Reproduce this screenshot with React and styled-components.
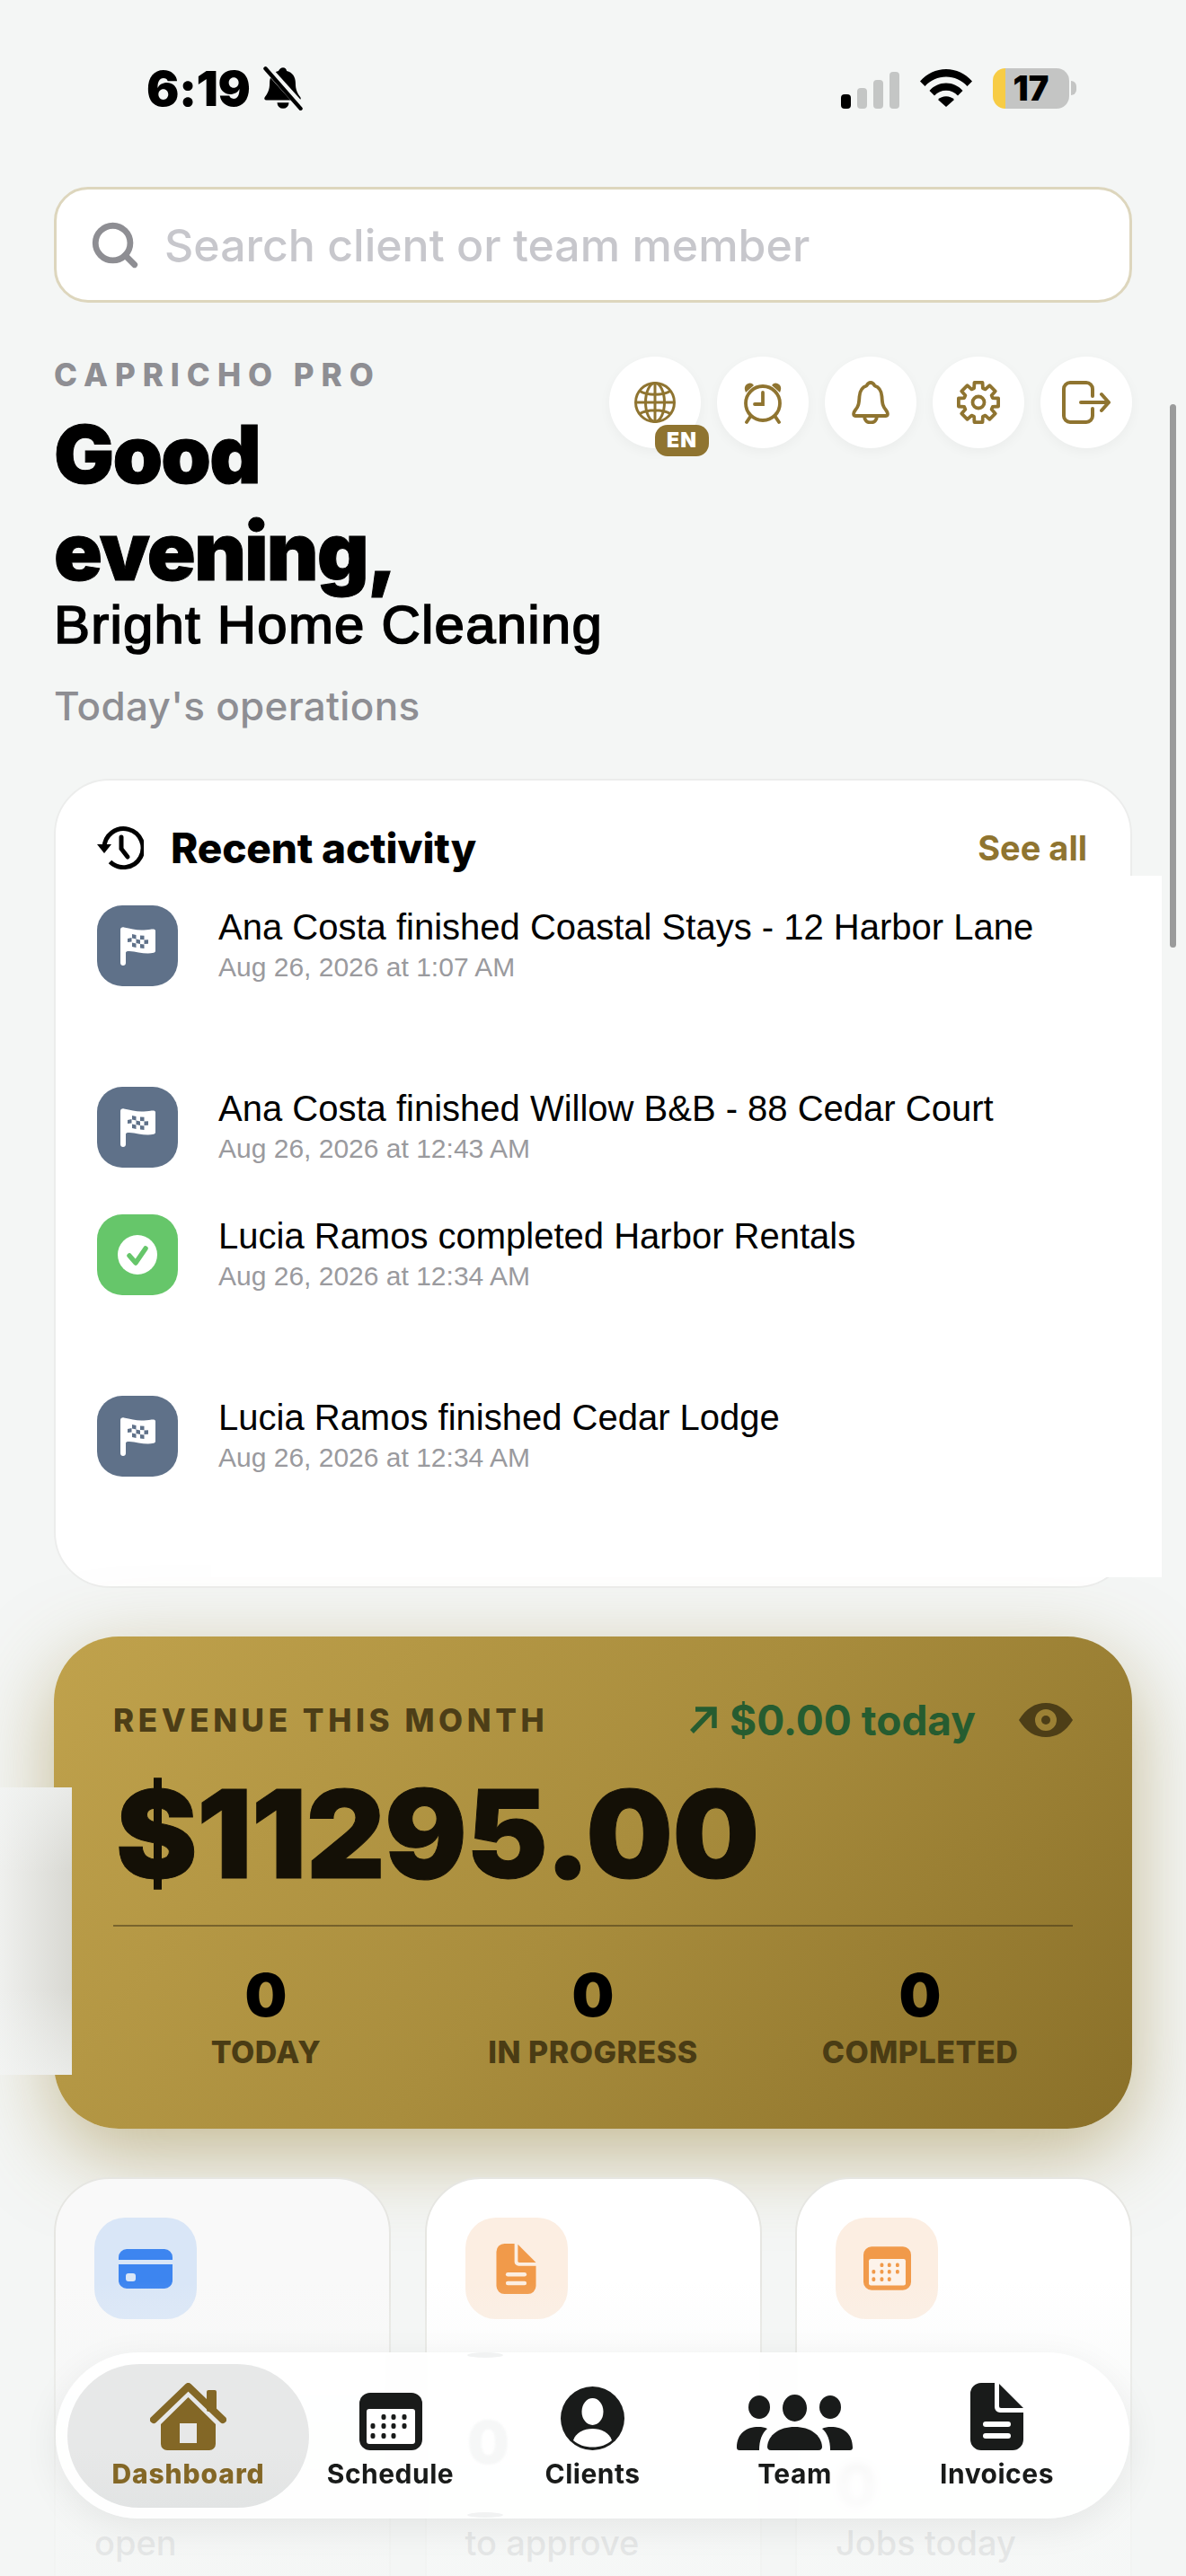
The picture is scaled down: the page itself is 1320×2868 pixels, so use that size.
import styled, { createGlobalStyle } from "styled-components";
import { Search } from "lucide-react";

const GOLD = "#8f7430";
const INK = "#191b1a";

const GlobalStyle = createGlobalStyle`
    html, body {
        margin: 0;
        padding: 0;
        background: #f4f6f5;
        font-family: Inter, "Liberation Sans", sans-serif;
    }
    * { box-sizing: border-box; }
`;

const Screen = styled.div`
    position: relative;
    width: 1320px;
    height: 2868px;
    padding: 0 60px;
    overflow: hidden;
    background: #f4f6f5;
`;

const StatusBar = styled.div`
    display: flex;
    align-items: center;
    justify-content: space-between;
    height: 196px;
    margin-bottom: 12px;
    padding: 0 62px 0 103px;
`;

const StatusLeft = styled.div`
    display: flex;
    align-items: center;
    gap: 12px;
`;

const Clock = styled.span`
    font-size: 54px;
    font-weight: 900;
    letter-spacing: -0.5px;
    color: #000;
`;

const StatusRight = styled.div`
    display: flex;
    align-items: center;
    gap: 23px;
`;

const Signal = styled.div`
    display: flex;
    align-items: flex-end;
    gap: 7px;
    height: 41px;
    margin-top: 4px;
`;

const SignalBar = styled.i`
    display: block;
    width: 11px;
    height: ${(p) => p.$h}px;
    border-radius: 4px;
    background: ${(p) => (p.$on ? "#000" : "#c4c6c5")};
`;

const Battery = styled.div`
    display: flex;
    align-items: center;
    justify-content: center;
    width: 85px;
    height: 45px;
    border-radius: 14px;
    font-size: 38px;
    line-height: 45px;
    font-weight: 900;
    color: #000;
    background: linear-gradient(90deg, #f7cc45 14px, #c4c5c4 14px);
`;

const BatteryNub = styled.i`
    display: block;
    width: 6px;
    height: 16px;
    margin-left: -21px;
    border-radius: 0 6px 6px 0;
    background: #c4c5c4;
`;

const SearchBox = styled.label`
    display: flex;
    align-items: center;
    gap: 26px;
    height: 129px;
    padding: 0 40px 0 36px;
    border: 3px solid #ddd6bd;
    border-radius: 38px;
    background: #fff;
    color: #8e8e93;
`;

const SearchInput = styled.input`
    flex: 1;
    border: 0;
    outline: 0;
    padding: 0;
    background: transparent;
    font-family: Inter, sans-serif;
    font-size: 50px;
    font-weight: 500;
    &::placeholder { color: #c7c7cc; opacity: 1; }
`;

const Header = styled.header`
    display: flex;
    align-items: flex-start;
    justify-content: space-between;
    margin-top: 60px;
`;

const TitleBlock = styled.div`
    display: flex;
    flex-direction: column;
`;

const Kicker = styled.div`
    font-size: 35px;
    line-height: 40px;
    font-weight: 800;
    letter-spacing: 8px;
    color: #8e8e93;
`;

const Greeting = styled.h1`
    width: 460px;
    margin: 15px 0 0;
    font-size: 89px;
    line-height: 108px;
    font-weight: 900;
    letter-spacing: -1.7px;
    -webkit-text-stroke: 1px #000;
    color: #000;
`;

const Company = styled.div`
    margin-top: -4px;
    font-family: "Liberation Sans", Arial, sans-serif;
    font-size: 60px;
    line-height: 64px;
    letter-spacing: 1.2px;
    -webkit-text-stroke: 1.7px #000;
    color: #000;
`;

const Subtitle = styled.div`
    margin-top: 32px;
    font-size: 44px;
    line-height: 52px;
    font-weight: 500;
    letter-spacing: 0.3px;
    color: #8e8e93;
`;

const HeaderActions = styled.div`
    display: flex;
    gap: 18px;
`;

const RoundButton = styled.button`
    position: relative;
    display: flex;
    align-items: center;
    justify-content: center;
    width: 102px;
    height: 102px;
    padding: 0;
    border: 0;
    border-radius: 50%;
    background: #fff;
    color: ${GOLD};
    box-shadow: 0 4px 14px rgba(0, 0, 0, 0.04);
`;

const LangBadge = styled.span`
    position: absolute;
    left: 51px;
    top: 76px;
    width: 60px;
    height: 35px;
    border-radius: 14px;
    background: ${GOLD};
    color: #fff;
    font-family: Inter, sans-serif;
    font-size: 23px;
    line-height: 35px;
    font-weight: 900;
    letter-spacing: 1px;
    text-align: center;
`;

const ActivityCard = styled.section`
    margin-top: 55px;
    padding: 46px 48px 122px 46px;
    border: 2px solid #ecedec;
    border-radius: 62px;
    background: #fff;
`;

const ActivityHead = styled.div`
    display: flex;
    align-items: center;
    height: 58px;
    margin-bottom: 35px;
`;

const ActivityTitle = styled.h2`
    flex: 1;
    margin: 0 0 0 30px;
    font-size: 46px;
    font-weight: 800;
    letter-spacing: -0.2px;
    color: #000;
`;

const SeeAll = styled.a`
    font-size: 38px;
    font-weight: 700;
    color: ${GOLD};
`;

const ActivityRow = styled.div`
    position: relative;
    z-index: 2;
    display: flex;
    margin-bottom: ${(p) => p.$gap}px;
    &:last-child { margin-bottom: 0; }
`;

const RowIcon = styled.div`
    display: flex;
    align-items: center;
    justify-content: center;
    flex: none;
    width: 90px;
    height: 90px;
    border-radius: 28px;
    background: ${(p) => p.$bg};
`;

const RowText = styled.div`
    margin-left: 45px;
    padding-top: 1px;
    font-family: "Liberation Sans", Arial, sans-serif;
`;

const RowTitle = styled.div`
    font-size: 40px;
    line-height: 46px;
    color: #000;
`;

const RowDate = styled.div`
    margin-top: 4px;
    font-size: 30px;
    line-height: 36px;
    color: #9a9a9e;
`;

// white block that sits over the card's lower right in the capture
const WhitePatch = styled.div`
    position: absolute;
    z-index: 1;
    left: 235px;
    top: 975px;
    width: 1058px;
    height: 781px;
    background: #fff;
`;

const SidePatch = styled.div`
    position: absolute;
    z-index: 3;
    left: 0;
    top: 1990px;
    width: 80px;
    height: 320px;
    background:
        linear-gradient(180deg, rgba(244, 246, 245, 0.6), transparent 30%, transparent 70%, rgba(244, 246, 245, 0.6)),
        linear-gradient(90deg, #eff0ee, #d8d8d2);
`;

const RevenueCard = styled.section`
    margin-top: 54px;
    padding: 63px 66px 66px;
    height: 548px;
    border-radius: 72px;
    background: linear-gradient(130deg, #c0a24c 0%, #a98d3d 50%, #8a7029 100%);
    box-shadow: 0 28px 90px rgba(150, 125, 50, 0.5);
`;

const RevenueTop = styled.div`
    display: flex;
    align-items: center;
    height: 60px;
`;

const RevenueLabel = styled.div`
    flex: 1;
    font-size: 35px;
    font-weight: 800;
    letter-spacing: 4.6px;
    color: #4d3e17;
`;

const TodayChange = styled.div`
    display: flex;
    align-items: center;
    gap: 14px;
    margin-right: 48px;
    font-size: 46px;
    font-weight: 700;
    color: #265c30;
`;

const Amount = styled.div`
    margin: 22px 0 0 3px;
    font-size: 136px;
    line-height: 150px;
    font-weight: 900;
    letter-spacing: -0.6px;
    -webkit-text-stroke: 1px #141006;
    color: #141006;
`;

const Divider = styled.hr`
    margin: 26px 0 0;
    border: 0;
    height: 2px;
    background: rgba(60, 48, 20, 0.5);
`;

const Stats = styled.div`
    display: grid;
    grid-template-columns: repeat(3, 1fr);
    margin: 38px -12px 0;
`;

const Stat = styled.div`
    text-align: center;
`;

const StatValue = styled.div`
    font-size: 66px;
    line-height: 76px;
    font-weight: 900;
    color: #000;
`;

const StatLabel = styled.div`
    margin-top: 6px;
    font-size: 34px;
    line-height: 40px;
    font-weight: 800;
    letter-spacing: 0.5px;
    color: #4a3c14;
`;

const SummaryGrid = styled.div`
    display: grid;
    grid-template-columns: repeat(3, 375px);
    justify-content: space-between;
    margin-top: 54px;
`;

const SummaryCard = styled.div`
    height: 520px;
    padding: 43px;
    border: 2px solid #e6e6e2;
    border-radius: 62px;
    background: ${(p) => p.$bg || "#fff"};
`;

const SummaryIcon = styled.div`
    display: flex;
    align-items: center;
    justify-content: center;
    width: 114px;
    height: 113px;
    border-radius: 34px;
    background: ${(p) => p.$bg};
`;

const SummaryValue = styled.div`
    height: 80px;
    margin-top: 145px;
    font-size: 66px;
    line-height: 80px;
    font-weight: 900;
    color: #000;
`;

const SummaryLabel = styled.div`
    margin-top: 1px;
    font-size: 38px;
    line-height: 46px;
    font-weight: 500;
    color: #8e8e93;
`;

const BottomFade = styled.div`
    position: absolute;
    left: 0;
    right: 0;
    top: 2540px;
    bottom: 0;
    background: linear-gradient(180deg, rgba(244, 246, 245, 0), rgba(244, 246, 245, 0.85) 70%);
`;

const TabBar = styled.nav`
    position: absolute;
    z-index: 4;
    left: 62px;
    top: 2619px;
    width: 1195px;
    height: 185px;
    display: grid;
    grid-template-columns: repeat(5, 225px);
    padding: 0 35px;
    border-radius: 92px;
    background: rgba(255, 255, 255, 0.9);
    backdrop-filter: blur(3px);
    box-shadow: 0 10px 40px rgba(0, 0, 0, 0.07);
`;

const GhostZero = styled.span`
    position: absolute;
    left: 458px;
    top: 70px;
    font-size: 66px;
    line-height: 60px;
    font-weight: 900;
    color: #f6f7f7;
    filter: blur(1px);
`;

const GhostArc = styled.i`
    position: absolute;
    left: 458px;
    width: 40px;
    height: 6px;
    top: ${(p) => p.$top}px;
    border-radius: 50%;
    background: #f1f2f2;
`;

const Tab = styled.a`
    position: relative;
    display: flex;
    flex-direction: column;
    align-items: center;
    height: 100%;
    padding-top: 34px;
    color: ${(p) => (p.$active ? "#836726" : INK)};
    &::before {
        content: ${(p) => (p.$active ? '""' : "none")};
        position: absolute;
        left: -22px;
        right: -22px;
        top: 13px;
        bottom: 12px;
        border-radius: 80px;
        background: linear-gradient(180deg, #e7e8e8 60%, #e2e4e4);
    }
`;

const TabIcon = styled.div`
    position: relative;
    display: flex;
    align-items: flex-end;
    justify-content: center;
    height: 75px;
`;

const TabLabel = styled.span`
    position: relative;
    margin-top: 8px;
    font-size: 30px;
    line-height: 36px;
    font-weight: ${(p) => (p.$active ? 800 : 700)};
    letter-spacing: ${(p) => (p.$active ? "0.9px" : "0.5px")};
`;

const Scrollbar = styled.div`
    position: absolute;
    z-index: 5;
    right: 11px;
    top: 450px;
    width: 7px;
    height: 605px;
    border-radius: 4px;
    background: #9a9b9b;
`;

const BellSlash = () => (
    <svg width="50" height="50" viewBox="0 0 46 46">
        <path d="M23 2c2 0 3.500 1.500 3.800 3.600 6 1.400 9 6.400 9 12.400 0 7 2.200 11 5 14.500 1 1.500 0 3-1.700 3H6c-1.800 0-2.700-1.500-1.700-3 2.800-3.500 5-7.500 5-14.500 0-6 3-11 9-12.400C19.500 3.500 21 2 23 2z" fill="#000" />
        <path d="M17 38h12a6 6 0 0 1-12 0z" fill="#000" />
        <path d="M6 2l36 40" stroke="#f4f6f5" strokeWidth="8" />
        <path d="M5 3l36 41" stroke="#000" strokeWidth="4" strokeLinecap="round" />
    </svg>
);

const Wifi = () => (
    <svg width="58" height="42" viewBox="0 0 58 42" fill="#000">
        <path d="M0 13.500C7.500 4.800 17.800 0 29 0s21.500 4.800 29 13.500l-5.500 5.500C46.300 12.200 38 8.500 29 8.500S11.700 12.200 5.500 19z" />
        <path d="M10.500 24C15.300 18.500 21.800 15.500 29 15.500s13.700 3 18.500 8.500L42 29.500C38.500 25.700 34 23.800 29 23.800s-9.500 1.900-13 5.700z" />
        <path d="M20 34c2.400-2.400 5.500-3.700 9-3.700s6.600 1.300 9 3.700l-9 8z" />
    </svg>
);

const Globe = () => (
    <svg width="46" height="46" viewBox="0 0 46 46" fill="none" stroke="currentColor" strokeWidth="3">
        <circle cx="23" cy="23" r="21.500" />
        <ellipse cx="23" cy="23" rx="10.500" ry="21.500" />
        <path d="M23 1.500v43M1.500 23h43M6 10.500c9 5 25 5 34 0M6 35.500c9-5 25-5 34 0" />
    </svg>
);

const Alarm = () => (
    <svg width="44" height="48" viewBox="0 0 44 48" fill="none" stroke="currentColor" strokeWidth="3.800" strokeLinecap="round">
        <circle cx="22" cy="25" r="19" />
        <path d="M22 13v13H13M8 40l-4 6M36 40l4 6" />
        <path d="M2 10a6 6 0 0 1 8-7l2 2-9 8z" fill="currentColor" stroke="none" />
        <path d="M42 10a6 6 0 0 0-8-7l-2 2 9 8z" fill="currentColor" stroke="none" />
    </svg>
);

const Bell = () => (
    <svg width="46" height="48" viewBox="0 0 46 48" fill="none" stroke="currentColor" strokeWidth="3.800" strokeLinejoin="round">
        <path d="M23 2c2.500 0 3.500 1.500 4.500 3.500 5 1.500 7.500 5.500 8 12 .5 8 1 11 4.500 15 2 2.500 3 6.500 0 6.500H6c-3 0-2-4 0-6.500 3.500-4 4-7 4.500-15 .5-6.500 3-10.500 8-12C19.500 3.500 20.500 2 23 2z" />
        <path d="M16 39c0 5 3 7.500 7 7.500s7-2.500 7-7.500" />
    </svg>
);

// 8 tooth cog outline
const cogPath = (() => {
    const pts = [];
    for (let i = 0; i < 8; i++) {
        const a = (i * Math.PI) / 4;
        [[-0.3, 16.5], [-0.2, 22.5], [0.2, 22.5], [0.3, 16.5]].forEach(([da, r]) => {
            pts.push(`${(24 + r * Math.sin(a + da)).toFixed(1)} ${(24 - r * Math.cos(a + da)).toFixed(1)}`);
        });
    }
    return `M${pts.join("L")}Z`;
})();

const Cog = () => (
    <svg width="48" height="48" viewBox="0 0 48 48" fill="none" stroke="currentColor" strokeWidth="3.800" strokeLinejoin="round">
        <path d={cogPath} />
        <circle cx="24" cy="24" r="6.500" />
    </svg>
);

const Exit = () => (
    <svg width="54" height="48" viewBox="0 0 54 48" fill="none" stroke="currentColor" strokeWidth="4" strokeLinecap="round" strokeLinejoin="round">
        <path d="M34 17V9a7 7 0 0 0-7-7H9a7 7 0 0 0-7 7v30a7 7 0 0 0 7 7h18a7 7 0 0 0 7-7v-8" />
        <path d="M21 24h31M44 15l8 9-8 9" />
    </svg>
);

const HistoryIcon = () => (
    <svg width="52" height="48" viewBox="0 0 52 48" fill="none" stroke="#000" strokeWidth="5">
        <path d="M8 24a21.500 21.500 0 1 1 6.500 15.500" />
        <path d="M0 20h16l-8 10z" fill="#000" stroke="none" />
        <path d="M27 12v13l7 9" strokeLinecap="round" />
    </svg>
);

const Flag = () => (
    <svg width="39" height="43" viewBox="0 0 39 43">
        <path d="M0 3c0-2 2-3 4-2.500C12 2 18 4 26 3.500c4-.3 8-1 11-1 1.500 0 2 1 2 2v22c0 1.500-1 2-2 2.300-9 2.200-18-1.300-27-1.800-2-.1-3.500.3-4 1.500V40c0 2-1.300 3-3 3s-3-1-3-3z" fill="#fff" />
        <path d="M8 13l4.500-1v4.500L8 17zM13 8l4.500 1v4.500L13 12.500zM17.500 13.500l4.500 1v4.500l-4.500-1zM22 9.500l4.500.3v4.500l-4.500-.3zM26.500 14.500l4.500-.3v4.500l-4.500.3zM13 17.500l4.500 1V23L13 22zM22 19l4.500.5V24L22 23.500z" fill="#5f7189" />
    </svg>
);

const CheckBadge = () => (
    <svg width="44" height="44" viewBox="0 0 44 44">
        <circle cx="22" cy="22" r="22" fill="#fff" />
        <path d="M13 23l7 8 11-16" fill="none" stroke="#66c66a" strokeWidth="5.500" strokeLinecap="round" strokeLinejoin="round" />
    </svg>
);

const TrendArrow = () => (
    <svg width="32" height="32" viewBox="0 0 32 32" fill="none" stroke="#265c30" strokeWidth="5.500">
        <path d="M4 29L27 5M8 4h21v21" />
    </svg>
);

const Eye = () => (
    <svg width="60" height="38" viewBox="0 0 60 38" fillRule="evenodd" fill="#4d3e17">
        <path d="M0 19C8 6 18 0 30 0s22 6 30 19c-8 13-18 19-30 19S8 32 0 19zM30 7a12 12 0 1 0 0 24 12 12 0 0 0 0-24z" />
        <circle cx="30" cy="19" r="5" />
    </svg>
);

const CardIcon = () => (
    <svg width="60" height="45" viewBox="0 0 60 45" fill="#3d85f0">
        <path d="M0 10a9 9 0 0 1 9-9h42a9 9 0 0 1 9 9v3H0zM0 18h60v18a9 9 0 0 1-9 9H9a9 9 0 0 1-9-9z" />
        <rect x="8" y="28" width="11" height="9" rx="3" fill="#d9e6f7" />
    </svg>
);

const CalendarIcon = ({ color, bg, w, h }) => (
    <svg width={w} height={h} viewBox="0 0 70 64">
        <rect width="70" height="64" rx="12" fill={color} />
        <rect x="8" y="18" width="54" height="39" rx="3" fill={bg} />
        {[[27, 27], [38, 27], [50, 27], [15, 37], [27, 37], [38, 37], [50, 37], [15, 48], [27, 48], [38, 48]].map(([x, y]) => (
            <rect key={`${x}-${y}`} x={x - 2.5} y={y - 3} width="5" height="6" rx="2" fill={color} />
        ))}
    </svg>
);

const DocIcon = ({ color, bg, w, h }) => (
    <svg width={w} height={h} viewBox="0 0 59 75">
        <path d="M27 0H12A12 12 0 0 0 0 12v51a12 12 0 0 0 12 12h35a12 12 0 0 0 12-12V33H33a6 6 0 0 1-6-6z" fill={color} />
        <path d="M32 1l27 27H34a2 2 0 0 1-2-2z" fill={color} />
        <rect x="14" y="43" width="31" height="6" rx="3" fill={bg} />
        <rect x="14" y="56" width="31" height="6" rx="3" fill={bg} />
    </svg>
);

const HomeIcon = () => (
    <svg width="85" height="75" viewBox="0 0 85 75" fill="#836726" fillRule="evenodd">
        <path d="M4 41L42.500 4 81 41" fill="none" stroke="#836726" strokeWidth="8" strokeLinecap="round" strokeLinejoin="round" />
        <rect x="63" y="8" width="11" height="24" rx="2" />
        <path d="M42.500 16L73 46v22a7 7 0 0 1-7 7H19a7 7 0 0 1-7-7V46zM33 45v22h19V45z" />
    </svg>
);

const PersonIcon = () => (
    <svg width="71" height="71" viewBox="0 0 71 71" fill={INK}>
        <circle cx="35.500" cy="35.500" r="35.500" />
        <ellipse cx="35.500" cy="28" rx="12" ry="15" fill="#fff" />
        <path d="M14 60c3-9 12-13 21.500-13S54 51 57 60c-5.500 5-13 7.500-21.500 7.500S19.500 65 14 60z" fill="#fff" />
    </svg>
);

const TeamIcon = () => (
    <svg width="129" height="62" viewBox="0 0 129 62" fill={INK}>
        <ellipse cx="25" cy="14" rx="12" ry="13" />
        <ellipse cx="64.500" cy="15" rx="13.500" ry="15" />
        <ellipse cx="104" cy="14" rx="12" ry="13" />
        <path d="M0 59c0-16 11-23 24-23 4 0 7 .5 10 2-6 5-9 13-9 24H3a3 3 0 0 1-3-3z" />
        <path d="M129 59c0-16-11-23-24-23-4 0-7 .5-10 2 6 5 9 13 9 24h22a3 3 0 0 0 3-3z" />
        <path d="M38 62c-3 0-4-2-4-4 1-13 13-22 30.500-22S94 45 95 58c0 2-1 4-4 4z" />
    </svg>
);

const activity = [
    { title: "Ana Costa finished Coastal Stays - 12 Harbor Lane", date: "Aug 26, 2026 at 1:07 AM", kind: "flag", gap: 112 },
    { title: "Ana Costa finished Willow B&B - 88 Cedar Court", date: "Aug 26, 2026 at 12:43 AM", kind: "flag", gap: 52 },
    { title: "Lucia Ramos completed Harbor Rentals", date: "Aug 26, 2026 at 12:34 AM", kind: "check", gap: 112 },
    { title: "Lucia Ramos finished Cedar Lodge", date: "Aug 26, 2026 at 12:34 AM", kind: "flag", gap: 0 },
];

const stats = [
    { value: "0", label: "TODAY" },
    { value: "0", label: "IN PROGRESS" },
    { value: "0", label: "COMPLETED" },
];

const App = () => {
    return (
        <Screen>
            <GlobalStyle />
            <StatusBar>
                <StatusLeft>
                    <Clock>6:19</Clock>
                    <BellSlash />
                </StatusLeft>
                <StatusRight>
                    <Signal>
                        <SignalBar $h={16} $on />
                        <SignalBar $h={23} />
                        <SignalBar $h={32} />
                        <SignalBar $h={41} />
                    </Signal>
                    <Wifi />
                    <Battery>17</Battery>
                    <BatteryNub />
                </StatusRight>
            </StatusBar>

            <SearchBox>
                <Search size={58} strokeWidth={2.8} />
                <SearchInput placeholder="Search client or team member" readOnly />
            </SearchBox>

            <Header>
                <TitleBlock>
                    <Kicker>CAPRICHO PRO</Kicker>
                    <Greeting>Good evening,</Greeting>
                    <Company>Bright Home Cleaning</Company>
                    <Subtitle>Today's operations</Subtitle>
                </TitleBlock>
                <HeaderActions>
                    <RoundButton>
                        <Globe />
                        <LangBadge>EN</LangBadge>
                    </RoundButton>
                    <RoundButton><Alarm /></RoundButton>
                    <RoundButton><Bell /></RoundButton>
                    <RoundButton><Cog /></RoundButton>
                    <RoundButton><Exit /></RoundButton>
                </HeaderActions>
            </Header>

            <ActivityCard>
                <ActivityHead>
                    <HistoryIcon />
                    <ActivityTitle>Recent activity</ActivityTitle>
                    <SeeAll>See all</SeeAll>
                </ActivityHead>
                {activity.map((item) => (
                    <ActivityRow key={item.title} $gap={item.gap}>
                        <RowIcon $bg={item.kind === "flag" ? "#5f7189" : "#66c66a"}>
                            {item.kind === "flag" ? <Flag /> : <CheckBadge />}
                        </RowIcon>
                        <RowText>
                            <RowTitle>{item.title}</RowTitle>
                            <RowDate>{item.date}</RowDate>
                        </RowText>
                    </ActivityRow>
                ))}
            </ActivityCard>
            <WhitePatch />

            <RevenueCard>
                <RevenueTop>
                    <RevenueLabel>REVENUE THIS MONTH</RevenueLabel>
                    <TodayChange>
                        <TrendArrow />
                        $0.00 today
                    </TodayChange>
                    <Eye />
                </RevenueTop>
                <Amount>$11295.00</Amount>
                <Divider />
                <Stats>
                    {stats.map((stat) => (
                        <Stat key={stat.label}>
                            <StatValue>{stat.value}</StatValue>
                            <StatLabel>{stat.label}</StatLabel>
                        </Stat>
                    ))}
                </Stats>
            </RevenueCard>
            <SidePatch />

            <SummaryGrid>
                <SummaryCard $bg="#f9f9f9">
                    <SummaryIcon $bg="#d9e6f7"><CardIcon /></SummaryIcon>
                    <SummaryValue />
                    <SummaryLabel>open</SummaryLabel>
                </SummaryCard>
                <SummaryCard>
                    <SummaryIcon $bg="#fceee2"><DocIcon color="#f19a4a" bg="#fceee2" w={45} h={56} /></SummaryIcon>
                    <SummaryValue />
                    <SummaryLabel>to approve</SummaryLabel>
                </SummaryCard>
                <SummaryCard>
                    <SummaryIcon $bg="#fceee2"><CalendarIcon color="#f19a4a" bg="#fdf3ea" w={53} h={49} /></SummaryIcon>
                    <SummaryValue>0</SummaryValue>
                    <SummaryLabel>Jobs today</SummaryLabel>
                </SummaryCard>
            </SummaryGrid>

            <BottomFade />

            <TabBar>
                <GhostArc $top={0} />
                <GhostZero>0</GhostZero>
                <GhostArc $top={178} />
                <Tab $active>
                    <TabIcon><HomeIcon /></TabIcon>
                    <TabLabel $active>Dashboard</TabLabel>
                </Tab>
                <Tab>
                    <TabIcon><CalendarIcon color={INK} bg="#fff" w={70} h={64} /></TabIcon>
                    <TabLabel>Schedule</TabLabel>
                </Tab>
                <Tab>
                    <TabIcon><PersonIcon /></TabIcon>
                    <TabLabel>Clients</TabLabel>
                </Tab>
                <Tab>
                    <TabIcon><TeamIcon /></TabIcon>
                    <TabLabel>Team</TabLabel>
                </Tab>
                <Tab>
                    <TabIcon><DocIcon color={INK} bg="#fff" w={59} h={75} /></TabIcon>
                    <TabLabel>Invoices</TabLabel>
                </Tab>
            </TabBar>

            <Scrollbar />
        </Screen>
    );
};

export default App;
